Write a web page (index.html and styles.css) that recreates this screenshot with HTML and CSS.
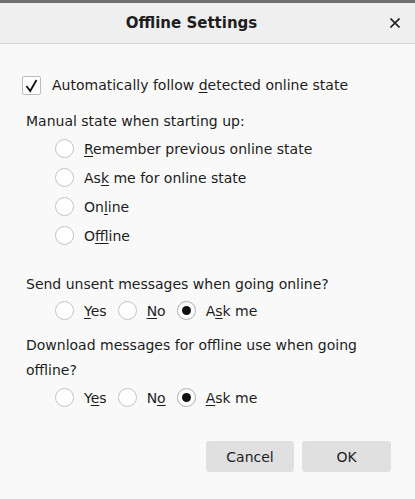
FILE: index.html
```html
<!DOCTYPE html>
<html lang="en">
<head>
    <meta charset="UTF-8">
    <title>Offline Settings</title>
    <link rel="stylesheet" href="styles.css">
</head>
<body>
    <div class="frame-edge"></div>

    <!-- Dialog title bar -->
    <div class="titlebar">
        <span class="title">Offline Settings</span>
        <span class="close">
            <svg width="10" height="10" viewBox="0 0 10 10"><path d="M0.5 0.5 L9.5 9.5 M9.5 0.5 L0.5 9.5" stroke="#222" stroke-width="1.6" fill="none"/></svg>
        </span>
    </div>

    <div class="content">
        <div class="check-row">
            <span class="checkbox">
                <svg width="19" height="19" viewBox="0 0 19 19"><path d="M4.5 10 L8.2 15 L14.5 4" stroke="#111" stroke-width="1.8" fill="none"/></svg>
            </span>
            <span>Automatically follow <u>d</u>etected online state</span>
        </div>

        <div class="label first">Manual state when starting up:</div>
        <div class="options stack">
            <div class="radio-row"><span class="radio"></span><span><u>R</u>emember previous online state</span></div>
            <div class="radio-row"><span class="radio"></span><span>As<u>k</u> me for online state</span></div>
            <div class="radio-row"><span class="radio"></span><span>On<u>l</u>ine</span></div>
            <div class="radio-row"><span class="radio"></span><span>O<u>f</u>fline</span></div>
        </div>

        <div class="label send">Send unsent messages when going online?</div>
        <div class="options inline send-opts">
            <div class="radio-row"><span class="radio"></span><span><u>Y</u>es</span></div>
            <div class="radio-row"><span class="radio"></span><span><u>N</u>o</span></div>
            <div class="radio-row"><span class="radio checked"></span><span>A<u>s</u>k me</span></div>
        </div>

        <div class="label download">Download messages for offline use when going offline?</div>
        <div class="options inline">
            <div class="radio-row"><span class="radio"></span><span>Y<u>e</u>s</span></div>
            <div class="radio-row"><span class="radio"></span><span>N<u>o</u></span></div>
            <div class="radio-row"><span class="radio checked"></span><span><u>A</u>sk me</span></div>
        </div>

        <div class="buttons">
            <button type="button" class="btn">Cancel</button>
            <button type="button" class="btn">OK</button>
        </div>
    </div>
</body>
</html>
```

FILE: styles.css
```css
/* Global */
body {
    margin: 0;
    font-family: "DejaVu Sans", sans-serif;
    font-size: 14px;
    color: #1d1d1d;
    background-color: #f9f9f9;
}

u {
    text-decoration-thickness: 1px;
    text-underline-offset: 2px;
}

.frame-edge {
    height: 3px;
    background-color: #6f6f6f;
}

/* Title bar */
.titlebar {
    height: 40px;
    display: flex;
    align-items: center;
    background-color: #efefef;
    border-bottom: 1px solid #d4d4d4;
}

.title {
    flex: 1;
    text-align: center;
    font-size: 15px;
    font-weight: bold;
    padding-left: 8px;
}

.close {
    width: 40px;
    display: flex;
    justify-content: center;
}

.close svg {
    display: block;
}

/* Content */
.content {
    padding: 0 24px 0 26px;
}

.check-row {
    display: flex;
    align-items: center;
    height: 24px;
    margin-top: 29px;
    margin-left: -4px;
}

.checkbox {
    width: 17px;
    height: 17px;
    border: 1px solid #bdbdbd;
    border-radius: 2px;
    background-color: #fff;
    margin-right: 11px;
    position: relative;
}

.checkbox svg {
    position: absolute;
    left: -1px;
    top: -1px;
}

.label {
    line-height: 20px;
}

.label.first {
    margin-top: 14px;
}

.label.send {
    margin-top: 24px;
}

.label.download {
    margin-top: 8px;
    line-height: 25px;
    padding-right: 20px;
}

.options {
    padding-left: 29px;
}

.options.stack {
    margin-top: 3px;
}

.options.send-opts {
    margin-top: 2px;
}

.options.inline {
    display: flex;
}

.radio-row {
    display: flex;
    align-items: center;
    height: 29px;
}

.options.inline .radio-row {
    margin-right: 11px;
}

.radio {
    width: 17px;
    height: 17px;
    border: 1px solid #c4c4c4;
    border-radius: 50%;
    background-color: #fff;
    margin-right: 10px;
    display: flex;
    align-items: center;
    justify-content: center;
}

.radio.checked {
    border-color: #adadad;
}

.radio.checked::after {
    content: "";
    width: 9px;
    height: 9px;
    border-radius: 50%;
    background-color: #111;
}

/* Buttons */
.buttons {
    display: flex;
    justify-content: flex-end;
    gap: 8px;
    margin-top: 29px;
}

.btn {
    font-family: "DejaVu Sans", sans-serif;
    font-size: 14px;
    color: #1d1d1d;
    background-color: #e0e0e0;
    border: none;
    border-radius: 3px;
    height: 31px;
    width: 88px;
    padding: 0;
}

.btn + .btn {
    width: 89px;
}
```
